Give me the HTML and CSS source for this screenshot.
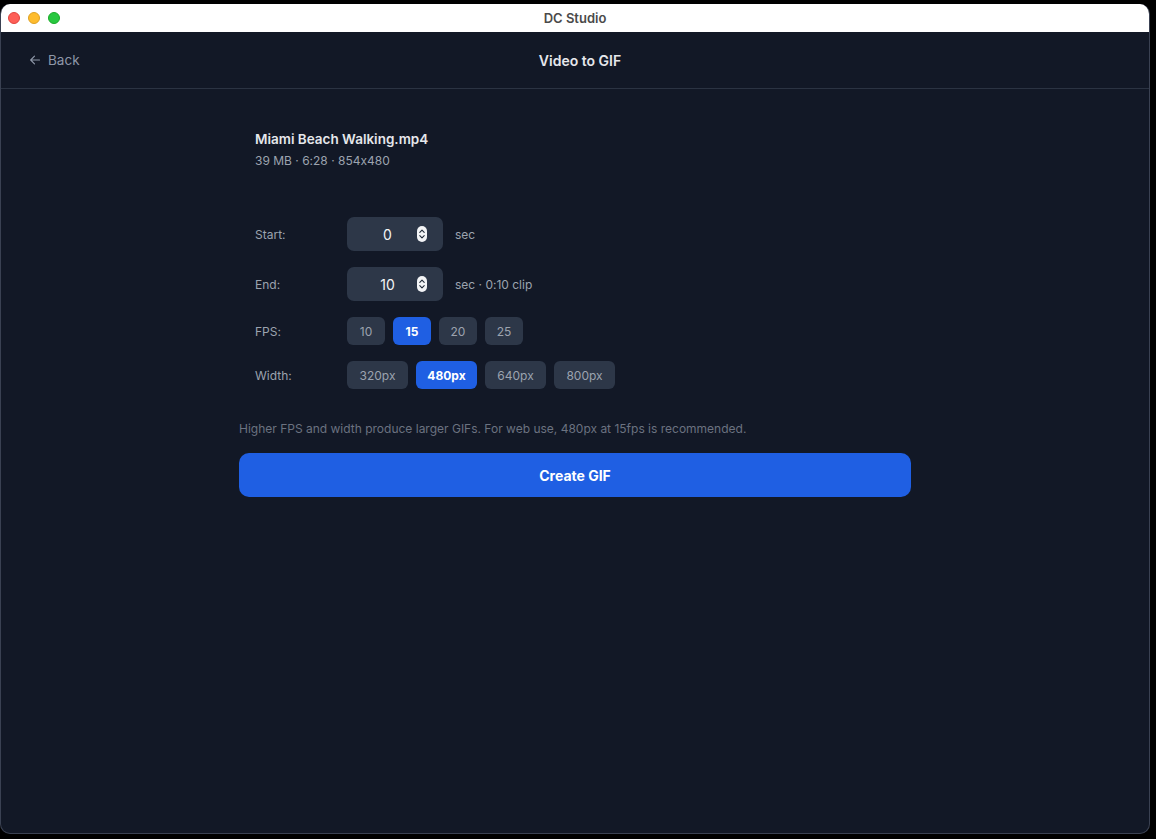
FILE: index.html
```html
<!DOCTYPE html>
<html>
<head>
<meta charset="utf-8">
<link rel="stylesheet" href="styles.css">
</head>
<body>
<div class="window">
  <div class="titlebar">
    <div class="lights">
      <span class="light red"></span>
      <span class="light yellow"></span>
      <span class="light green"></span>
    </div>
    <div class="title">DC Studio</div>
  </div>
  <div class="app">
    <header class="header">
      <div class="back">
        <svg class="back-icon" viewBox="0 0 12 12" width="12" height="12"><path d="M10.5 6H1.8M5.5 2.2L1.7 6l3.8 3.8" fill="none" stroke="currentColor" stroke-width="1.2" stroke-linecap="round" stroke-linejoin="round"/></svg>
        <span>Back</span>
      </div>
      <div class="page-title">Video to GIF</div>
      <div class="spacer"></div>
    </header>
    <main class="content">
      <section class="file">
        <div class="file-name">Miami Beach Walking.mp4</div>
        <div class="file-meta">39 MB · 6:28 · 854x480</div>
      </section>
      <section class="form">
        <div class="row row-input">
          <div class="label">Start:</div>
          <div class="num-input">
            <span class="num-val">0</span>
            <span class="stepper"><svg viewBox="0 0 10 16" width="10" height="16"><rect x="0" y="0" width="10" height="16" rx="5" fill="#f3f4f6"/><path d="M2.8 6.3L5 4.2l2.2 2.1M2.8 9.7L5 11.8l2.2-2.1" fill="none" stroke="#1f2937" stroke-width="1.1" stroke-linecap="round" stroke-linejoin="round"/></svg></span>
          </div>
          <div class="suffix">sec</div>
        </div>
        <div class="row row-input">
          <div class="label">End:</div>
          <div class="num-input">
            <span class="num-val">10</span>
            <span class="stepper"><svg viewBox="0 0 10 16" width="10" height="16"><rect x="0" y="0" width="10" height="16" rx="5" fill="#f3f4f6"/><path d="M2.8 6.3L5 4.2l2.2 2.1M2.8 9.7L5 11.8l2.2-2.1" fill="none" stroke="#1f2937" stroke-width="1.1" stroke-linecap="round" stroke-linejoin="round"/></svg></span>
          </div>
          <div class="suffix">sec · 0:10 clip</div>
        </div>
        <div class="row row-chips">
          <div class="label">FPS:</div>
          <div class="chips">
            <span class="chip fps">10</span>
            <span class="chip fps active">15</span>
            <span class="chip fps">20</span>
            <span class="chip fps">25</span>
          </div>
        </div>
        <div class="row row-chips">
          <div class="label">Width:</div>
          <div class="chips">
            <span class="chip wpx">320px</span>
            <span class="chip wpx active">480px</span>
            <span class="chip wpx">640px</span>
            <span class="chip wpx">800px</span>
          </div>
        </div>
      </section>
      <p class="hint">Higher FPS and width produce larger GIFs. For web use, 480px at 15fps is recommended.</p>
      <button class="create">Create GIF</button>
    </main>
  </div>
</div>
</body>
</html>
```
FILE: styles.css
```css
* { box-sizing: border-box; }
html, body {
  margin: 0;
  padding: 0;
  background: #000;
  width: 1156px;
  height: 839px;
  overflow: hidden;
  font-family: Inter, "Noto Sans", sans-serif;
  font-feature-settings: "calt" 0;
}
.window {
  margin-top: 4px;
  width: 1150px;
  height: 830px;
  border-radius: 10px;
  overflow: hidden;
  background: #121826;
  border: 1px solid #3a4152;
  border-top: none;
  display: flex;
  flex-direction: column;
}
.titlebar {
  height: 28px;
  background: #ffffff;
  display: flex;
  align-items: center;
  justify-content: center;
  position: relative;
  flex-shrink: 0;
}
.lights {
  position: absolute;
  left: 7px;
  top: 8px;
  display: flex;
  gap: 8px;
}
.light {
  width: 12px;
  height: 12px;
  border-radius: 50%;
  display: block;
}
.red { background: #fe5f57; border: 0.5px solid #e0443e; }
.yellow { background: #febc2e; border: 0.5px solid #dea123; }
.green { background: #28c840; border: 0.5px solid #1aab29; }
.title {
  font-size: 13px;
  font-weight: 600;
  color: #4a4a4a;
}
.app {
  flex: 1;
  display: flex;
  flex-direction: column;
}
.header {
  height: 57px;
  border-bottom: 1px solid #2b3342;
  display: flex;
  align-items: center;
  padding: 0 28px;
  flex-shrink: 0;
}
.back {
  width: 120px;
  display: flex;
  align-items: center;
  gap: 7px;
  color: #8e97a8;
  font-size: 13.5px;
}
.back-icon { color: #8e97a8; }
.page-title {
  flex: 1;
  text-align: center;
  color: #e5e7eb;
  font-size: 14px;
  font-weight: 600;
}
.spacer { width: 110px; }
.content {
  width: 672px;
  margin: 0 auto;
  padding-top: 41px;
}
.file {
  padding-left: 16px;
}
.file-name {
  color: #e5e7eb;
  font-size: 13.5px;
  font-weight: 600;
  line-height: 18px;
}
.file-meta {
  color: #9ca3af;
  font-size: 12px;
  margin-top: 6px;
  line-height: 14px;
}
.form {
  padding-left: 16px;
  margin-top: 49px;
  display: flex;
  flex-direction: column;
}
.row {
  display: flex;
  align-items: center;
}
.row-input { height: 34px; margin-bottom: 16px; }
.row-chips { height: 28px; margin-bottom: 16px; }
.row-chips + .row-chips { margin-bottom: 0; }
.label {
  width: 92px;
  color: #9ca3af;
  font-size: 12px;
}
.num-input {
  width: 96px;
  height: 34px;
  background: #2d3748;
  border-radius: 7px;
  display: flex;
  align-items: center;
  padding-right: 16px;
  padding-left: 11px;
}
.num-val {
  flex: 1;
  text-align: center;
  color: #f3f4f6;
  font-size: 14px;
}
.stepper { display: flex; }
.suffix {
  margin-left: 12px;
  color: #9ca3af;
  font-size: 12px;
}
.chips {
  display: flex;
  gap: 8px;
}
.chip {
  height: 28px;
  border-radius: 6px;
  background: #2d3748;
  color: #9ca3af;
  font-size: 12px;
  display: flex;
  align-items: center;
  justify-content: center;
}
.chip.fps { width: 38px; }
.chip.wpx { width: 61px; }
.chip.active {
  background: #1f5fe3;
  color: #ffffff;
  font-weight: 700;
}
.hint {
  margin: 33px 0 0 0;
  color: #6b7280;
  font-size: 12px;
  line-height: 14px;
}
.create {
  margin-top: 17px;
  width: 672px;
  height: 44px;
  border: none;
  border-radius: 10px;
  background: #1f5fe3;
  color: #ffffff;
  font-family: Inter, "Noto Sans", sans-serif;
  font-size: 14px;
  font-weight: 700;
  display: flex;
  align-items: center;
  justify-content: center;
}
```
